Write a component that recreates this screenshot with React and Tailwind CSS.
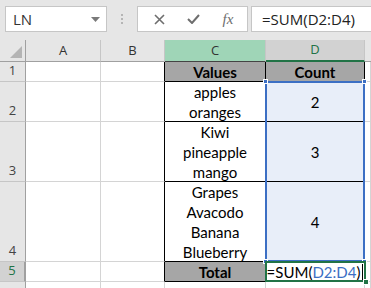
import React from 'react';

const ui = { fontFamily: '"Open Sans", "Noto Sans", sans-serif' };
const cellFont = { fontFamily: 'Lato, "Liberation Sans", sans-serif' };

function TopBar() {
  return (
    <div className="flex items-start h-[40px] bg-[#e6e6e6] pt-[6px] pl-[5px]">
      <div className="flex items-center justify-between w-[102px] h-[26px] bg-white border border-[#c6c6c6] pl-[7px] pr-[6px]">
        <span className="text-[15px] text-[#333]" style={ui}>LN</span>
        <svg width="9" height="5" viewBox="0 0 9 5"><path d="M0 0h9L4.5 5z" fill="#7a7a7a" /></svg>
      </div>
      <div className="flex flex-col gap-[2px] w-[30px] h-[26px] items-center justify-center">
        <span className="w-[2px] h-[2px] bg-[#b5b5b5]" />
        <span className="w-[2px] h-[2px] bg-[#b5b5b5]" />
        <span className="w-[2px] h-[2px] bg-[#b5b5b5]" />
      </div>
      <div className="flex items-center w-[111px] h-[26px] bg-white border border-[#c6c6c6]">
        <div className="w-[38px] flex justify-center pl-[4px]">
          <svg width="11" height="11" viewBox="0 0 11 11"><path d="M1 1L10 10M10 1L1 10" stroke="#6e6e6e" strokeWidth="1.6" /></svg>
        </div>
        <div className="w-[34px] flex justify-center">
          <svg width="13" height="10" viewBox="0 0 13 10"><path d="M1 5l4 4 7-8" stroke="#6e6e6e" strokeWidth="2" fill="none" /></svg>
        </div>
        <div className="w-[36px] flex justify-center">
          <span className="italic text-[15px] text-[#6e6e6e]" style={{ fontFamily: '"Liberation Serif", serif' }}>fx</span>
        </div>
      </div>
      <div className="flex items-center flex-1 h-[26px] bg-white border border-[#c6c6c6] border-r-0 ml-[3px] pl-[10px]">
        <span className="text-[15px] text-[#222]" style={ui}>=SUM(D2:D4)</span>
      </div>
    </div>
  );
}

const cols = 'grid-cols-[26px_75px_64px_101px_99px_1fr]';
const rows = 'grid-rows-[22px_20px_40px_60px_80px_20px_20px]';

function ColHead({ label, className = '' }) {
  return (
    <div className={`flex items-center justify-center border-r border-b text-[13px] text-[#333] ${className}`} style={ui}>
      {label}
    </div>
  );
}

function RowHead({ label, className = '' }) {
  return (
    <div className={`flex items-end justify-center pb-[1px] border-b border-[#c6c6c6] border-r border-r-[#a0a0a0] text-[13px] text-[#444] ${className}`} style={ui}>
      {label}
    </div>
  );
}

function Blank({ className = '' }) {
  return <div className={`border-r border-b border-[#d4d4d4] bg-white ${className}`} />;
}

function Lines({ items, bold }) {
  return (
    <div className={`flex flex-col items-center text-[15px] leading-[20px] text-black ${bold ? 'font-bold' : ''}`} style={cellFont}>
      {items.map((t) => (
        <span key={t}>{t}</span>
      ))}
    </div>
  );
}

export default function App() {
  return (
    <div className="w-[371px] h-[288px] overflow-hidden bg-white">
      <TopBar />
      <div className="relative">
        <div className={`grid ${cols} ${rows}`}>
          {/* header row */}
          <div className="relative bg-[#e6e6e6] border-r border-b border-[#a0a0a0]">
            <svg className="absolute right-[3px] bottom-[3px]" width="12" height="12" viewBox="0 0 12 12"><path d="M12 0V12H0z" fill="#b4b4b4" /></svg>
          </div>
          <ColHead label="A" className="bg-[#e6e6e6] border-r-[#c6c6c6] border-b-[#a0a0a0]" />
          <ColHead label="B" className="bg-[#e6e6e6] border-r-[#c6c6c6] border-b-[#a0a0a0]" />
          <ColHead label="C" className="bg-[#9fd5b7] border-r-[#c6c6c6] border-b-[#444]" />
          <ColHead label="D" className="bg-[#d2d2d2] border-r-[#c6c6c6] border-b-2 border-b-[#217346] text-[#217346]" />
          <ColHead label="" className="bg-[#e6e6e6] border-r-0 border-b-[#a0a0a0]" />

          {/* row 1 */}
          <RowHead label="1" className="bg-[#e6e6e6]" />
          <Blank />
          <Blank className="border-r-black" />
          <div className="flex items-center justify-center bg-[#a6a6a6] border-r border-b border-black">
            <Lines items={['Values']} bold />
          </div>
          <div className="flex items-center justify-center bg-[#a6a6a6] border-r border-b border-black">
            <Lines items={['Count']} bold />
          </div>
          <Blank />

          {/* row 2 */}
          <RowHead label="2" className="bg-[#e6e6e6]" />
          <Blank />
          <Blank className="border-r-black" />
          <div className="flex items-center justify-center border-r border-b border-black">
            <Lines items={['apples', 'oranges']} />
          </div>
          <div className="flex items-center justify-center bg-[#e8eef9] border-r border-b border-black">
            <Lines items={['2']} />
          </div>
          <Blank />

          {/* row 3 */}
          <RowHead label="3" className="bg-[#e6e6e6]" />
          <Blank />
          <Blank className="border-r-black" />
          <div className="flex items-center justify-center border-r border-b border-black">
            <Lines items={['Kiwi', 'pineapple', 'mango']} />
          </div>
          <div className="flex items-center justify-center bg-[#e8eef9] border-r border-b border-black">
            <Lines items={['3']} />
          </div>
          <Blank />

          {/* row 4 */}
          <RowHead label="4" className="bg-[#e6e6e6]" />
          <Blank />
          <Blank className="border-r-black" />
          <div className="flex items-center justify-center border-r border-b border-black">
            <Lines items={['Grapes', 'Avacodo', 'Banana', 'Blueberry']} />
          </div>
          <div className="flex items-center justify-center bg-[#e8eef9] border-r border-b border-black">
            <Lines items={['4']} />
          </div>
          <Blank />

          {/* row 5 */}
          <RowHead label="5" className="bg-[#d2d2d2] text-[#217346] border-r-2 border-r-[#217346]" />
          <Blank />
          <Blank className="border-r-black" />
          <div className="flex items-center justify-center bg-[#a6a6a6] border-r border-b border-black">
            <Lines items={['Total']} bold />
          </div>
          <div className="flex items-center justify-center bg-white border-r border-b border-black">
            <span className="text-[15px] leading-[20px] text-black" style={cellFont}>
              =SUM(<span className="text-[#3c6fc4]">D2:D4</span>)
            </span>
            <span className="w-[1px] h-[16px] bg-black ml-[2px]" />
          </div>
          <Blank />

          {/* row 6 (cut off by the window) */}
          <RowHead label="" className="bg-[#e6e6e6]" />
          <Blank />
          <Blank />
          <Blank />
          <Blank />
          <Blank />
        </div>

        {/* range highlight D2:D4 */}
        <div className="absolute left-[265px] top-[41px] w-[100px] h-[181px] border-2 border-[#3c6fc4] pointer-events-none" />
        <span className="absolute left-[263px] top-[39px] w-[5px] h-[5px] bg-[#3c6fc4] border border-white" />
        <span className="absolute left-[362px] top-[39px] w-[5px] h-[5px] bg-[#3c6fc4] border border-white" />
        <span className="absolute left-[263px] top-[219px] w-[5px] h-[5px] bg-[#3c6fc4] border border-white" />
        <span className="absolute left-[362px] top-[219px] w-[5px] h-[5px] bg-[#3c6fc4] border border-white" />

        {/* active cell D5 */}
        <div className="absolute left-[265px] top-[221px] w-[101px] h-[21px] border-2 border-[#217346] pointer-events-none" />
        <span className="absolute left-[363px] top-[239px] w-[6px] h-[6px] bg-[#217346] border border-white" />
      </div>
    </div>
  );
}
